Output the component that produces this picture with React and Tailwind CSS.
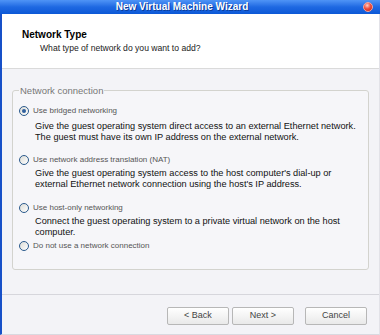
import React, { useState } from 'react';

const options = [
    {
        id: 'bridged',
        label: 'Use bridged networking',
        desc: ['Give the guest operating system direct access to an external Ethernet network.', 'The guest must have its own IP address on the external network.'],
        gap: 'mt-[9px]',
        descGap: 'mt-[5px]',
    },
    {
        id: 'nat',
        label: 'Use network address translation (NAT)',
        desc: ["Give the guest operating system access to the host computer's dial-up or", "external Ethernet network connection using the host's IP address."],
        gap: 'mt-[12px]',
        descGap: 'mt-[3px]',
    },
    {
        id: 'hostonly',
        label: 'Use host-only networking',
        desc: ['Connect the guest operating system to a private virtual network on the host', 'computer.'],
        gap: 'mt-[13px]',
        descGap: 'mt-[3px]',
    },
    {
        id: 'none',
        label: 'Do not use a network connection',
        desc: [],
        gap: 'mt-[3px]',
        descGap: '',
    },
];

const Radio = ({ checked }) => (
    <span className="w-[10px] h-[10px] rounded-full border border-[#2b5a8c] bg-gradient-to-br from-[#dcdcd6] to-white flex items-center justify-center shrink-0">
        {checked && <span className="w-[4px] h-[4px] rounded-full bg-[#2f5f9e]" />}
    </span>
);

const WizardButton = ({ children, className = '' }) => (
    <button
        type="button"
        className={`w-[62px] h-[18px] rounded-[2px] border border-[#b7b7b7] bg-gradient-to-b from-white to-[#e9e9e9] text-[9px] text-[#444] ${className}`}
    >
        {children}
    </button>
);

export default function App() {
    const [selected, setSelected] = useState('bridged');

    return (
        <div className="w-[380px] h-[335px] overflow-hidden bg-[#f3f3f7] font-['Liberation_Sans',Arial,sans-serif] flex flex-col">
            {/* title bar */}
            <div className="relative h-[14px] shrink-0 bg-gradient-to-b from-[#4f94f6] via-[#1e68e2] to-[#0b58d6] flex items-center justify-center">
                <span className="text-white font-bold text-[10px] leading-none [text-shadow:1px_1px_0_#0a3c9a] pr-[16px]">New Virtual Machine Wizard</span>
                <span className="absolute right-[7px] top-[2px] w-[10px] h-[10px] rounded-full bg-[radial-gradient(circle_at_40%_30%,#ffd0c8_0%,#f05040_45%,#b81c10_100%)] border border-[#f3a49a]" />
            </div>

            <div className="flex-1 flex flex-col border-l-2 border-l-[#1750c8] border-r border-r-[#e2e2e8] border-b border-b-[#d9d9e0]">
                {/* header */}
                <div className="h-[55px] shrink-0 bg-white border-b border-[#dadada] pl-[20px] pt-[14px]">
                    <div className="text-[10px] font-bold text-black leading-[13px]">Network Type</div>
                    <div className="text-[8.6px] text-[#222] leading-[11px] pl-[18px] mt-[2px]">What type of network do you want to add?</div>
                </div>

                {/* body */}
                <div className="flex-1 px-[10px] pt-[16px]">
                    <fieldset className="h-[185px] border border-[#d3d3ce] rounded-[3px] pl-[6px] pr-[4px] bg-[#f6f6f9]">
                        <legend className="px-[1px] text-[9.5px] text-[#777] leading-[11px]">Network connection</legend>
                        <div className="flex flex-col">
                            {options.map((opt) => (
                                <div key={opt.id} className={opt.gap}>
                                    <label
                                        className="flex items-center gap-[4px] h-[11px] cursor-pointer"
                                        onClick={() => setSelected(opt.id)}
                                    >
                                        <Radio checked={selected === opt.id} />
                                        <span className="text-[8px] text-[#555] leading-[11px]">{opt.label}</span>
                                    </label>
                                    {opt.desc.length > 0 && (
                                        <div className={`pl-[16px] ${opt.descGap} text-[9.2px] text-[#111] leading-[10.5px]`}>
                                            {opt.desc.map((line) => (
                                                <div key={line}>{line}</div>
                                            ))}
                                        </div>
                                    )}
                                </div>
                            ))}
                        </div>
                    </fieldset>
                </div>

                {/* footer */}
                <div className="h-[40px] shrink-0 border-t border-[#d6d6dc] flex items-start justify-end pt-[12px] pr-[12px]">
                    <WizardButton>&lt; Back</WizardButton>
                    <WizardButton className="ml-[3px]">Next &gt;</WizardButton>
                    <WizardButton className="ml-[11px]">Cancel</WizardButton>
                </div>
            </div>
        </div>
    );
}
